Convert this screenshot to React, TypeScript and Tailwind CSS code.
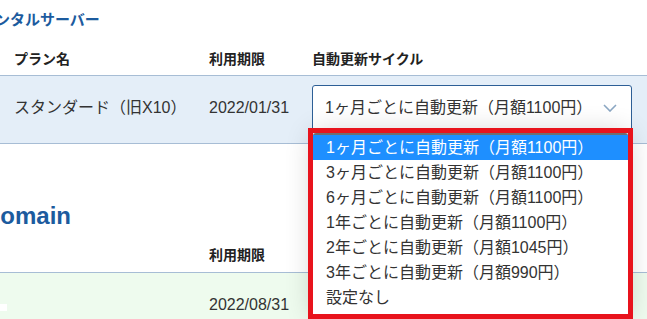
import React from "react";

const options = [
  "1ヶ月ごとに自動更新（月額1100円）",
  "3ヶ月ごとに自動更新（月額1100円）",
  "6ヶ月ごとに自動更新（月額1100円）",
  "1年ごとに自動更新（月額1100円）",
  "2年ごとに自動更新（月額1045円）",
  "3年ごとに自動更新（月額990円）",
  "設定なし",
];

const font = "font-['Liberation_Sans','Noto_Sans_CJK_JP',sans-serif]";

const App: React.FC = () => {
  return (
    <div className={`relative w-[647px] h-[319px] overflow-hidden bg-white text-[#333] ${font}`}>
      {/* Rental server section */}
      <h2 className="ml-[-20px] pt-[10px] text-[15px] leading-[20px] font-bold text-[#1c5b9e] whitespace-nowrap">
        レンタルサーバー
      </h2>

      <div className="flex pt-[19px] pb-[6px] text-[14px] leading-[20px] font-bold text-[#222] border-b border-[#a7bdd5]">
        <div className="w-[209px] pl-[14px]">プラン名</div>
        <div className="w-[103px]">利用期限</div>
        <div>自動更新サイクル</div>
      </div>

      <div className="flex h-[68px] pt-[9px] bg-[#e4eef8] border-b border-[#a7bdd5] text-[16px]">
        <div className="w-[209px] pl-[14px] h-[46px] flex items-center whitespace-nowrap">
          スタンダード（旧X10）
        </div>
        <div className="w-[103px] h-[46px] flex items-center">2022/01/31</div>
        <div className="w-[320px] h-[46px] flex items-center justify-between pl-[12px] pr-[14px] bg-white border border-[#2d5f96] rounded-[3px]">
          <span className="whitespace-nowrap">1ヶ月ごとに自動更新（月額1100円）</span>
          <svg width="14" height="8" viewBox="0 0 14 8" fill="none">
            <path d="M1 1l6 6 6-6" stroke="#8ba7c3" strokeWidth="1.6" />
          </svg>
        </div>
      </div>

      {/* Domain section */}
      <h2 className="ml-[-17px] mt-[58px] text-[24px] leading-[28px] font-bold text-[#1c5b9e] whitespace-nowrap">
        Domain
      </h2>

      <div className="flex pt-[15px] pb-[7px] text-[14px] leading-[20px] font-bold text-[#222] border-b border-[#a7bdd5]">
        <div className="w-[209px] pl-[14px]"></div>
        <div className="w-[103px]">利用期限</div>
      </div>

      <div className="flex h-[80px] pt-[9px] bg-[#eefbee] text-[16px]">
        <div className="w-[209px] h-[46px] flex items-center">
          <div className="w-[7px] h-[7px] bg-white mt-[4px]"></div>
        </div>
        <div className="w-[103px] h-[46px] flex items-center">2022/08/31</div>
      </div>

      {/* Open dropdown list */}
      <div className="absolute left-[313px] top-[133px] w-[315px] h-[184px] bg-white border-t-2 border-[#6f6f6f] rounded-[3px] shadow-[0_0_28px_rgba(0,0,0,0.2)] text-[16px]">
        {options.map((o, i) => (
          <div
            key={o}
            className={`h-[25px] leading-[25px] pl-[13px] whitespace-nowrap ${
              i === 0 ? "bg-[#1e8fff] text-white" : "text-[#333]"
            }`}
          >
            {o}
          </div>
        ))}
      </div>

      {/* Highlight frame */}
      <div className="absolute left-[308px] top-[128px] w-[325px] h-[191px] border-[5px] border-[#e8131c]"></div>
    </div>
  );
};

export default App;
